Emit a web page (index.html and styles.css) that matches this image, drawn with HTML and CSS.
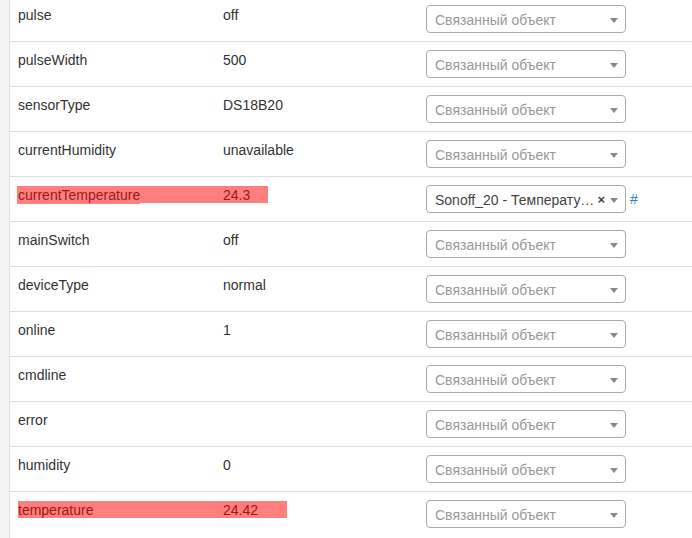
FILE: index.html
```html
<!DOCTYPE html>
<html>
<head lang="ru">
    <meta charset="UTF-8">
    <title>Свойства устройства</title>
    <link rel="stylesheet" href="styles.css">
</head>
<body>
    <div class="page">
        <div class="gutter"></div>
        <div class="content">
            <table class="props">
                <colgroup>
                    <col class="col_name">
                    <col class="col_value">
                    <col>
                </colgroup>
                <tr>
                    <td>pulse</td>
                    <td>off</td>
                    <td><span class="sel"><span class="sel_text placeholder">Связанный объект</span><span class="sel_arrow"></span></span></td>
                </tr>
                <tr>
                    <td>pulseWidth</td>
                    <td>500</td>
                    <td><span class="sel"><span class="sel_text placeholder">Связанный объект</span><span class="sel_arrow"></span></span></td>
                </tr>
                <tr>
                    <td>sensorType</td>
                    <td>DS18B20</td>
                    <td><span class="sel"><span class="sel_text placeholder">Связанный объект</span><span class="sel_arrow"></span></span></td>
                </tr>
                <tr>
                    <td>currentHumidity</td>
                    <td>unavailable</td>
                    <td><span class="sel"><span class="sel_text placeholder">Связанный объект</span><span class="sel_arrow"></span></span></td>
                </tr>
                <tr>
                    <td class="marked">currentTemperature<span class="marker marker_one"></span><span class="marker marker_one_tail"></span></td>
                    <td>24.3</td>
                    <td><span class="sel"><span class="sel_clear">×</span><span class="sel_text">Sonoff_20 - Температура</span><span class="sel_arrow"></span></span><a class="link" href="#">#</a></td>
                </tr>
                <tr>
                    <td>mainSwitch</td>
                    <td>off</td>
                    <td><span class="sel"><span class="sel_text placeholder">Связанный объект</span><span class="sel_arrow"></span></span></td>
                </tr>
                <tr>
                    <td>deviceType</td>
                    <td>normal</td>
                    <td><span class="sel"><span class="sel_text placeholder">Связанный объект</span><span class="sel_arrow"></span></span></td>
                </tr>
                <tr>
                    <td>online</td>
                    <td>1</td>
                    <td><span class="sel"><span class="sel_text placeholder">Связанный объект</span><span class="sel_arrow"></span></span></td>
                </tr>
                <tr>
                    <td>cmdline</td>
                    <td></td>
                    <td><span class="sel"><span class="sel_text placeholder">Связанный объект</span><span class="sel_arrow"></span></span></td>
                </tr>
                <tr>
                    <td>error</td>
                    <td></td>
                    <td><span class="sel"><span class="sel_text placeholder">Связанный объект</span><span class="sel_arrow"></span></span></td>
                </tr>
                <tr>
                    <td>humidity</td>
                    <td>0</td>
                    <td><span class="sel"><span class="sel_text placeholder">Связанный объект</span><span class="sel_arrow"></span></span></td>
                </tr>
                <tr>
                    <td class="marked">temperature<span class="marker marker_two"></span></td>
                    <td>24.42</td>
                    <td><span class="sel"><span class="sel_text placeholder">Связанный объект</span><span class="sel_arrow"></span></span></td>
                </tr>
            </table>
        </div>
    </div>
</body>
</html>
```

FILE: styles.css
```css
body {
    margin: 0;
    background: #fff;
    font-family: "Liberation Sans", Arial, sans-serif;
    font-size: 14px;
    line-height: 20px;
    color: #333;
}

.page {
    display: flex;
    min-height: 538px;
}

.gutter {
    width: 9px;
    background: #f4f4f4;
    border-right: 1px solid #e2e2e2;
    flex-shrink: 0;
}

.content {
    flex: 1;
    overflow: hidden;
}

/* первая строка обрезана сверху */
.props {
    width: 100%;
    margin-top: -4px;
    border-collapse: collapse;
    table-layout: fixed;
}

.col_name {
    width: 205px;
}

.col_value {
    width: 203px;
}

.props td {
    padding: 8px;
    border-top: 1px solid #ddd;
    vertical-align: top;
    white-space: nowrap;
}

.marked {
    position: relative;
}

.marker {
    position: absolute;
    top: 9px;
    height: 17px;
    background: rgba(255, 0, 0, 0.5);
}

.marker_one {
    left: 7px;
    width: 251px;
}

/* хвостик маркера снизу слева */
.marker_one_tail {
    top: 26px;
    left: 7px;
    width: 123px;
    height: 1px;
}

.marker_two {
    left: 8px;
    width: 269px;
}

.sel {
    position: relative;
    display: inline-block;
    box-sizing: border-box;
    width: 200px;
    height: 28px;
    border: 1px solid #aaa;
    border-radius: 4px;
    background: #fff;
    padding: 0 20px 0 8px;
    vertical-align: top;
}

.sel_text {
    display: block;
    height: 26px;
    line-height: 28px;
    color: #444;
    overflow: hidden;
    text-overflow: ellipsis;
    white-space: nowrap;
}

.sel_text.placeholder {
    color: #999;
}

.sel_clear {
    float: right;
    line-height: 28px;
    font-size: 13px;
    font-weight: bold;
    color: #444;
    margin-left: 2px;
}

.sel_arrow {
    position: absolute;
    top: 1px;
    right: 1px;
    width: 20px;
    height: 26px;
}

.sel_arrow::after {
    content: "";
    position: absolute;
    left: 50%;
    top: 50%;
    margin-left: -4px;
    margin-top: -2px;
    border-style: solid;
    border-width: 5px 4px 0 4px;
    border-color: #888 transparent transparent transparent;
}

.link {
    display: inline-block;
    margin-left: 4px;
    line-height: 28px;
    color: #337ab7;
    text-decoration: none;
}
```
